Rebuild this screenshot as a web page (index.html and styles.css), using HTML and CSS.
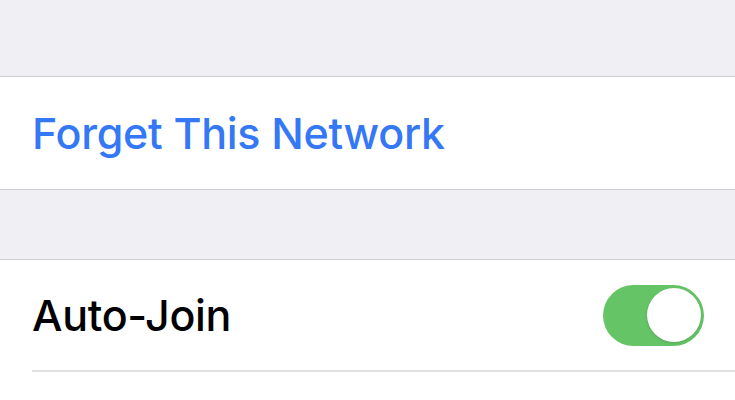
FILE: index.html
```html
<!DOCTYPE html>
<html>
<head>
<meta charset="utf-8">
<link rel="stylesheet" href="styles.css">
</head>
<body>
<div class="page">
  <div class="spacer top"></div>
  <div class="group">
    <div class="row"><span class="label link">Forget This Network</span></div>
  </div>
  <div class="spacer mid"></div>
  <div class="group open">
    <div class="row sep">
      <span class="label">Auto-Join</span>
      <span class="toggle on"><span class="knob"></span></span>
    </div>
  </div>
</div>
</body>
</html>
```
FILE: styles.css
```css
html, body {
  margin: 0;
  padding: 0;
  background: #ffffff;
}
.page {
  width: 735px;
  height: 400px;
  overflow: hidden;
  font-family: "Inter", "Liberation Sans", sans-serif;
  display: flex;
  flex-direction: column;
}
.spacer {
  background: #efeff4;
}
.spacer.top { height: 76px; }
.spacer.mid { height: 69px; }
.group {
  background: #fff;
  border-top: 1px solid #cfcfd3;
  border-bottom: 1px solid #cfcfd3;
}
.group.open {
  border-bottom: none;
  flex: 1;
}
.row {
  height: 112px;
  display: flex;
  align-items: center;
  padding-left: 32px;
  box-sizing: border-box;
}
.row.sep {
  height: 112px;
  margin-left: 32px;
  padding-left: 0;
  padding-right: 31px;
  border-bottom: 2px solid #e2e2e4;
  justify-content: space-between;
}
.label {
  font-size: 43px;
  font-weight: 500;
  color: #000;
  letter-spacing: -0.3px;
}
.label.link {
  color: #3478f6;
}
.toggle {
  width: 101px;
  height: 61px;
  border-radius: 31px;
  background: #65c466;
  display: flex;
  align-items: center;
  justify-content: flex-end;
  padding-right: 3px;
  box-sizing: border-box;
}
.knob {
  width: 54px;
  height: 54px;
  border-radius: 50%;
  background: #fff;
  box-shadow: 0 1px 3px rgba(0,0,0,0.15);
}
```
